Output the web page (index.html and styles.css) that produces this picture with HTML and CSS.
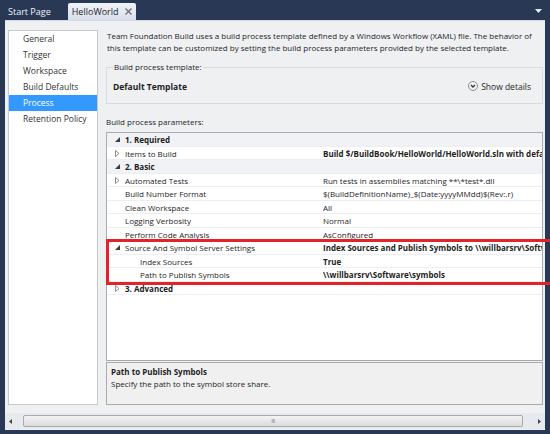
FILE: index.html
```html
<!DOCTYPE html>
<html>
<head>
<meta charset="utf-8">
<link rel="stylesheet" href="styles.css">
</head>
<body>
<div class="tabbar">
  <div class="tab">Start Page</div>
  <div class="tab active">HelloWorld
    <svg class="close" width="7" height="7" viewBox="0 0 7 7"><path d="M0.5 0.5 L6.5 6.5 M6.5 0.5 L0.5 6.5" stroke="#6d6d6d" stroke-width="1.3"/></svg>
  </div>
  <div class="spacer"></div>
  <svg class="dropdown" width="7" height="4" viewBox="0 0 7 4"><path d="M0 0 H7 L3.5 4 Z" fill="#e8edf5"/></svg>
</div>
<div class="doc">
  <div class="main">
    <ul class="nav">
      <li>General</li>
      <li>Trigger</li>
      <li>Workspace</li>
      <li>Build Defaults</li>
      <li class="sel">Process</li>
      <li>Retention Policy</li>
    </ul>
    <div class="content">
      <p class="intro">Team Foundation Build uses a build process template defined by a Windows Workflow (XAML) file. The behavior of this template can be customized by setting the build process parameters provided by the selected template.</p>
      <fieldset class="template">
        <legend>Build process template:</legend>
        <div class="template-row">
          <span class="tname">Default Template</span>
          <span class="details">
            <svg width="10" height="10" viewBox="0 0 10 10"><circle cx="5" cy="5" r="4.5" fill="#f4f4f4" stroke="#8a8a8a"/><path d="M3 4 L5 6 L7 4" fill="none" stroke="#333" stroke-width="1.3"/></svg>
            Show details
          </span>
        </div>
      </fieldset>
      <div class="params-label">Build process parameters:</div>
      <div class="grid">
        <div class="row cat"><span class="exp"><svg width="5" height="5" viewBox="0 0 5 5"><path d="M5 0 L5 5 L0 5 Z" fill="#3c3c3c"/></svg></span><span class="name">1. Required</span><span class="val"></span></div>
        <div class="row"><span class="exp"><svg width="5" height="7" viewBox="0 0 5 7"><path d="M0.5 0.5 L4 3.5 L0.5 6.5 Z" fill="#fff" stroke="#8e8e8e"/></svg></span><span class="name">Items to Build</span><span class="val b">Build $/BuildBook/HelloWorld/HelloWorld.sln with default platform and configuration</span></div>
        <div class="row cat"><span class="exp"><svg width="5" height="5" viewBox="0 0 5 5"><path d="M5 0 L5 5 L0 5 Z" fill="#3c3c3c"/></svg></span><span class="name">2. Basic</span><span class="val"></span></div>
        <div class="row"><span class="exp"><svg width="5" height="7" viewBox="0 0 5 7"><path d="M0.5 0.5 L4 3.5 L0.5 6.5 Z" fill="#fff" stroke="#8e8e8e"/></svg></span><span class="name">Automated Tests</span><span class="val">Run tests in assemblies matching **\*test*.dll</span></div>
        <div class="row"><span class="exp"></span><span class="name">Build Number Format</span><span class="val">$(BuildDefinitionName)_$(Date:yyyyMMdd)$(Rev:.r)</span></div>
        <div class="row"><span class="exp"></span><span class="name">Clean Workspace</span><span class="val">All</span></div>
        <div class="row"><span class="exp"></span><span class="name">Logging Verbosity</span><span class="val">Normal</span></div>
        <div class="row"><span class="exp"></span><span class="name">Perform Code Analysis</span><span class="val">AsConfigured</span></div>
        <div class="row"><span class="exp"><svg width="5" height="5" viewBox="0 0 5 5"><path d="M5 0 L5 5 L0 5 Z" fill="#3c3c3c"/></svg></span><span class="name">Source And Symbol Server Settings</span><span class="val b">Index Sources and Publish Symbols to \\willbarsrv\Software\symbols</span></div>
        <div class="row"><span class="exp"></span><span class="name sub">Index Sources</span><span class="val b">True</span></div>
        <div class="row"><span class="exp"></span><span class="name sub">Path to Publish Symbols</span><span class="val b">\\willbarsrv\Software\symbols</span></div>
        <div class="row"><span class="exp"><svg width="5" height="7" viewBox="0 0 5 7"><path d="M0.5 0.5 L4 3.5 L0.5 6.5 Z" fill="#fff" stroke="#8e8e8e"/></svg></span><span class="name b">3. Advanced</span><span class="val"></span></div>
        <div class="highlight"></div>
      </div>
      <div class="help">
        <div class="help-title">Path to Publish Symbols</div>
        <div class="help-text">Specify the path to the symbol store share.</div>
      </div>
    </div>
  </div>
  <div class="hscroll">
    <svg class="arrow" width="3" height="5" viewBox="0 0 3 5"><path d="M3 0 L0 2.5 L3 5 Z" fill="#444"/></svg>
    <div class="thumb"><span class="grip">III</span></div>
    <svg class="arrow" width="3" height="5" viewBox="0 0 3 5"><path d="M0 0 L3 2.5 L0 5 Z" fill="#444"/></svg>
  </div>
</div>
</body>
</html>
```
FILE: styles.css
```css
* { box-sizing: border-box; }
html, body { margin: 0; padding: 0; overflow: hidden; }
body {
  width: 550px;
  height: 434px;
  background: #293955;
  font-family: "Open Sans", "Noto Sans", sans-serif;
  font-size: 8px;
  color: #1e1e1e;
}
.tabbar {
  height: 20px;
  display: flex;
  align-items: flex-end;
  padding-left: 4px;
}
.tab {
  height: 17px;
  padding: 0 5px 0 4px;
  display: flex;
  align-items: center;
  color: #f2f4f8;
  font-size: 9px;
}
.tab.active {
  margin-left: 12px;
  background: linear-gradient(#f0f3f8, #d9dfeb);
  color: #1e1e1e;
  border-radius: 2px 2px 0 0;
  gap: 6px;
  padding: 0 4px 0 4px;
}
.spacer { flex: 1; }
.dropdown { align-self: center; margin: 2px 8px 0 0; }

.doc {
  margin: 0 5px;
  height: 410px;
  background: #eff0f2;
  border-top: 1px solid #d5dbe6;
  padding: 9px 2px 0 3px;
  display: flex;
  flex-direction: column;
}
.main {
  display: flex;
  gap: 8px;
  height: 375px;
}
.nav {
  width: 90px;
  flex: none;
  margin: 0;
  padding: 0;
  list-style: none;
  background: #fff;
  border: 1px solid #c6c9ce;
}
.nav li {
  height: 16px;
  line-height: 16px;
  padding-left: 14px;
  color: #333;
  font-size: 8.5px;
}
.nav li.sel {
  background: #3399ff;
  color: #fff;
}
.content {
  flex: 1;
  min-width: 0;
  display: flex;
  flex-direction: column;
}
.intro {
  margin: 0;
  line-height: 12px;
  padding-left: 1px;
}
.template {
  margin: 7px 0 0;
  padding: 0 11px 10px 6px;
  border: 1px solid #d8dce2;
}
.template legend {
  padding: 0 1px;
  line-height: 12px;
}
.template-row {
  display: flex;
  align-items: center;
  height: 14px;
  margin-top: 6px;
}
.tname {
  flex: 1;
  font-weight: bold;
  font-size: 8.5px;
}
.details {
  display: flex;
  align-items: center;
  gap: 3px;
  font-size: 8.5px;
}
.params-label {
  margin-top: 12px;
  line-height: 12px;
}
.grid {
  position: relative;
  margin-top: 4px;
  flex: 1;
  background: #fff;
  border: 1px solid #a9abaf;
}
.row {
  display: flex;
  align-items: center;
  height: 13.5px;
  white-space: nowrap;
  overflow: hidden;
  box-shadow: inset 0 -1px 0 #eceef1;
}
.row.cat {
  background: #f1f2f5;
  font-weight: bold;
}
.exp {
  width: 18px;
  flex: none;
  display: flex;
  justify-content: center;
  align-items: center;
  padding-left: 2px;
}
.name {
  width: 198px;
  flex: none;
  overflow: hidden;
}
.name.sub { padding-left: 15px; }
.val {
  flex: 1;
  overflow: hidden;
}
.b { font-weight: bold; }
.highlight {
  position: absolute;
  left: -1px;
  right: -20px;
  top: 106px;
  height: 46px;
  border: 3px solid #e2232b;
}
.help {
  height: 43px;
  flex: none;
  margin-top: 1px;
  background: #f0f0f0;
  border: 1px solid #a9abaf;
  padding: 3px 4px;
  line-height: 12px;
}
.help-title { font-weight: bold; }
.hscroll {
  margin: 8px -2px 0 -3px;
  height: 16px;
  background: #e6e9ee;
  display: flex;
  align-items: center;
  padding: 0 4px;
}
.hscroll .arrow { flex: none; }
.thumb {
  width: 500px;
  height: 12px;
  margin-left: 11px;
  margin-right: auto;
  border: 1px solid #a6a9ae;
  border-radius: 2px;
  background: linear-gradient(#f3f3f3, #dcdcdc);
  display: flex;
  justify-content: center;
  align-items: center;
}
.grip {
  font-size: 6px;
  color: #777;
  letter-spacing: -0.5px;
}
```
